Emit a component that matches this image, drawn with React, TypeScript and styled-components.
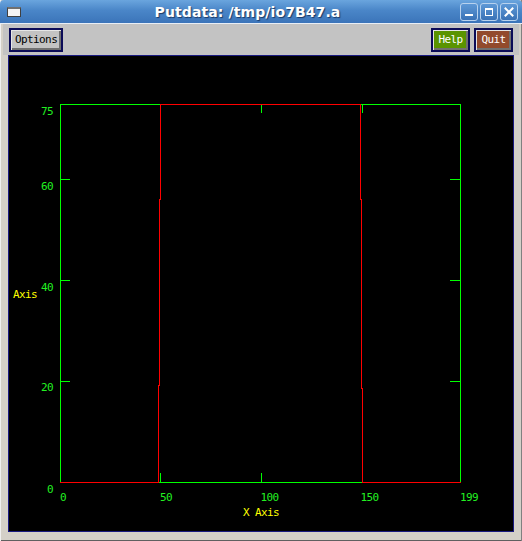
import React from "react";
import styled, { createGlobalStyle } from "styled-components";

const Global = createGlobalStyle`
  html, body { margin: 0; padding: 0; background: #000; }
  body { width: 522px; height: 541px; overflow: hidden; }
`;

const Window = styled.div`
  width: 522px;
  height: 541px;
  box-sizing: border-box;
  display: flex;
  flex-direction: column;
  background: #d4d0c8;
  box-shadow: inset 1px 0 0 #f0f0f0, inset -1px 0 0 #808080, inset 0 -1px 0 #606060;
  font-family: "DejaVu Sans Mono", "Liberation Mono", monospace;
`;

const TitleBar = styled.div`
  height: 23px;
  border-bottom: 1px solid #e8eef6;
  display: flex;
  align-items: center;
  padding: 0 4px 0 7px;
  background: linear-gradient(#6aa5de, #4a86c8 45%, #3b74b9);
  border-radius: 4px 4px 0 0;
`;

const WinIcon = styled.div`
  width: 12px;
  height: 7px;
  border: 1px solid #404040;
  border-top: 2px solid #707070;
  background: #f4f4f4;
`;

const Title = styled.div`
  flex: 1;
  text-align: center;
  color: #fff;
  font-family: "DejaVu Sans", sans-serif;
  font-weight: bold;
  font-size: 14px;
  letter-spacing: 0.1px;
  text-shadow: 1px 1px 1px #1a3a66;
  padding-left: 14px;
`;

const WinButtons = styled.div`
  display: flex;
  gap: 2px;
`;

const WinButton = styled.div`
  width: 16px;
  height: 16px;
  border: 1px solid #b8d2ee;
  border-radius: 3px;
  background: linear-gradient(#5d98d6, #3a72b6);
  display: flex;
  align-items: center;
  justify-content: center;
`;

const Toolbar = styled.div`
  height: 31px;
  box-sizing: border-box;
  margin: 0 3px;
  padding: 4px 6px 3px 6px;
  background: #c3c3c3;
  display: flex;
  align-items: flex-start;
  gap: 4px;
`;

const Spacer = styled.div`
  flex: 1;
`;

const Button = styled.button<{ $face: string; $ink: string; $min?: number }>`
  height: 24px;
  min-width: ${(p) => p.$min ?? 0}px;
  box-sizing: border-box;
  border: 2px solid #0c0c58;
  margin: 0;
  background: ${(p) => p.$face};
  box-shadow: inset 1px 1px 0 #e6e6e6, inset -2px -2px 0 #707070;
  color: ${(p) => p.$ink};
  font-family: "DejaVu Sans Mono", "Liberation Mono", monospace;
  font-size: 11px;
  letter-spacing: -0.6px;
  display: flex;
  align-items: center;
  justify-content: center;
  padding: 0 4px 1px 4px;
`;

const Canvas = styled.div`
  margin: 0 8px;
  width: 504px;
  height: 475px;
  border: 1px solid #1a1a80;
  background: #000;
`;

const Plot = styled.svg`
  display: block;
  font-family: "DejaVu Sans Mono", "Liberation Mono", monospace;
  font-size: 11px;
  letter-spacing: -0.6px;
`;

const G = "#00ff00";
const R = "#ff0000";
const LG = "#22f022";
const Y = "#ffff00";

const yLabels = [
  { t: "75", y: 115 },
  { t: "60", y: 190 },
  { t: "40", y: 291 },
  { t: "20", y: 391 },
  { t: "0", y: 493 },
];

const xLabels = [
  { t: "0", x: 60 },
  { t: "50", x: 160 },
  { t: "100", x: 260.5 },
  { t: "150", x: 360.5 },
  { t: "199", x: 460 },
];

/* red data trace drawn as stair-stepped pixel segments */
const redSegments = [
  { x: 60, y: 482, w: 99, h: 1 },
  { x: 158, y: 385, w: 1, h: 98 },
  { x: 159, y: 199, w: 1, h: 187 },
  { x: 160, y: 104, w: 1, h: 96 },
  { x: 160, y: 104, w: 201, h: 1 },
  { x: 360, y: 104, w: 1, h: 96 },
  { x: 361, y: 199, w: 1, h: 190 },
  { x: 362, y: 388, w: 1, h: 95 },
  { x: 362, y: 482, w: 99, h: 1 },
];

function Chart() {
  return (
    <Plot width={504} height={475} viewBox="9 56 504 475">
      <g shapeRendering="crispEdges" stroke={G} strokeWidth={1} fill="none">
        <rect x={60.5} y={104.5} width={400} height={378} />
        {[179.5, 280.5, 381.5].map((y) => (
          <g key={y}>
            <line x1={60} y1={y} x2={70} y2={y} />
            <line x1={450} y1={y} x2={460} y2={y} />
          </g>
        ))}
        <line x1={261.5} y1={104} x2={261.5} y2={113} />
        <line x1={362.5} y1={104} x2={362.5} y2={113} />
        <line x1={160.5} y1={473} x2={160.5} y2={482} />
        <line x1={261.5} y1={473} x2={261.5} y2={482} />
      </g>
      <g shapeRendering="crispEdges" fill={R}>
        {redSegments.map((s, i) => (
          <rect key={i} x={s.x} y={s.y} width={s.w} height={s.h} />
        ))}
      </g>
      <g fill={LG}>
        {yLabels.map((l) => (
          <text key={l.t} x={53} y={l.y} textAnchor="end">
            {l.t}
          </text>
        ))}
        {xLabels.map((l) => (
          <text key={l.t} x={l.x} y={501}>
            {l.t}
          </text>
        ))}
      </g>
      <text x={13} y={298} fill={Y}>
        Axis
      </text>
      <text x={243} y={516} fill={Y}>
        X Axis
      </text>
    </Plot>
  );
}

export default function App() {
  return (
    <>
      <Global />
      <Window>
        <TitleBar>
          <WinIcon />
          <Title>Putdata: /tmp/io7B47.a</Title>
          <WinButtons>
            <WinButton>
              <svg width="12" height="12" viewBox="0 0 12 12">
                <rect x="2" y="8" width="8" height="2" fill="#fff" />
              </svg>
            </WinButton>
            <WinButton>
              <svg width="12" height="12" viewBox="0 0 12 12">
                <rect x="2.5" y="2.5" width="7" height="7" fill="none" stroke="#fff" strokeWidth="1" />
                <rect x="2" y="2" width="8" height="2" fill="#fff" />
              </svg>
            </WinButton>
            <WinButton>
              <svg width="12" height="12" viewBox="0 0 12 12">
                <path d="M2.5 2.5 L9.5 9.5 M9.5 2.5 L2.5 9.5" stroke="#fff" strokeWidth="2" strokeLinecap="square" />
              </svg>
            </WinButton>
          </WinButtons>
        </TitleBar>
        <Toolbar>
          <Button $face="#c3c3c3" $ink="#000">Options</Button>
          <Spacer />
          <Button $face="#5a9400" $ink="#fff" $min={39}>Help</Button>
          <Button $face="#924a2c" $ink="#fff" $min={39}>Quit</Button>
        </Toolbar>
        <Canvas>
          <Chart />
        </Canvas>
      </Window>
    </>
  );
}
